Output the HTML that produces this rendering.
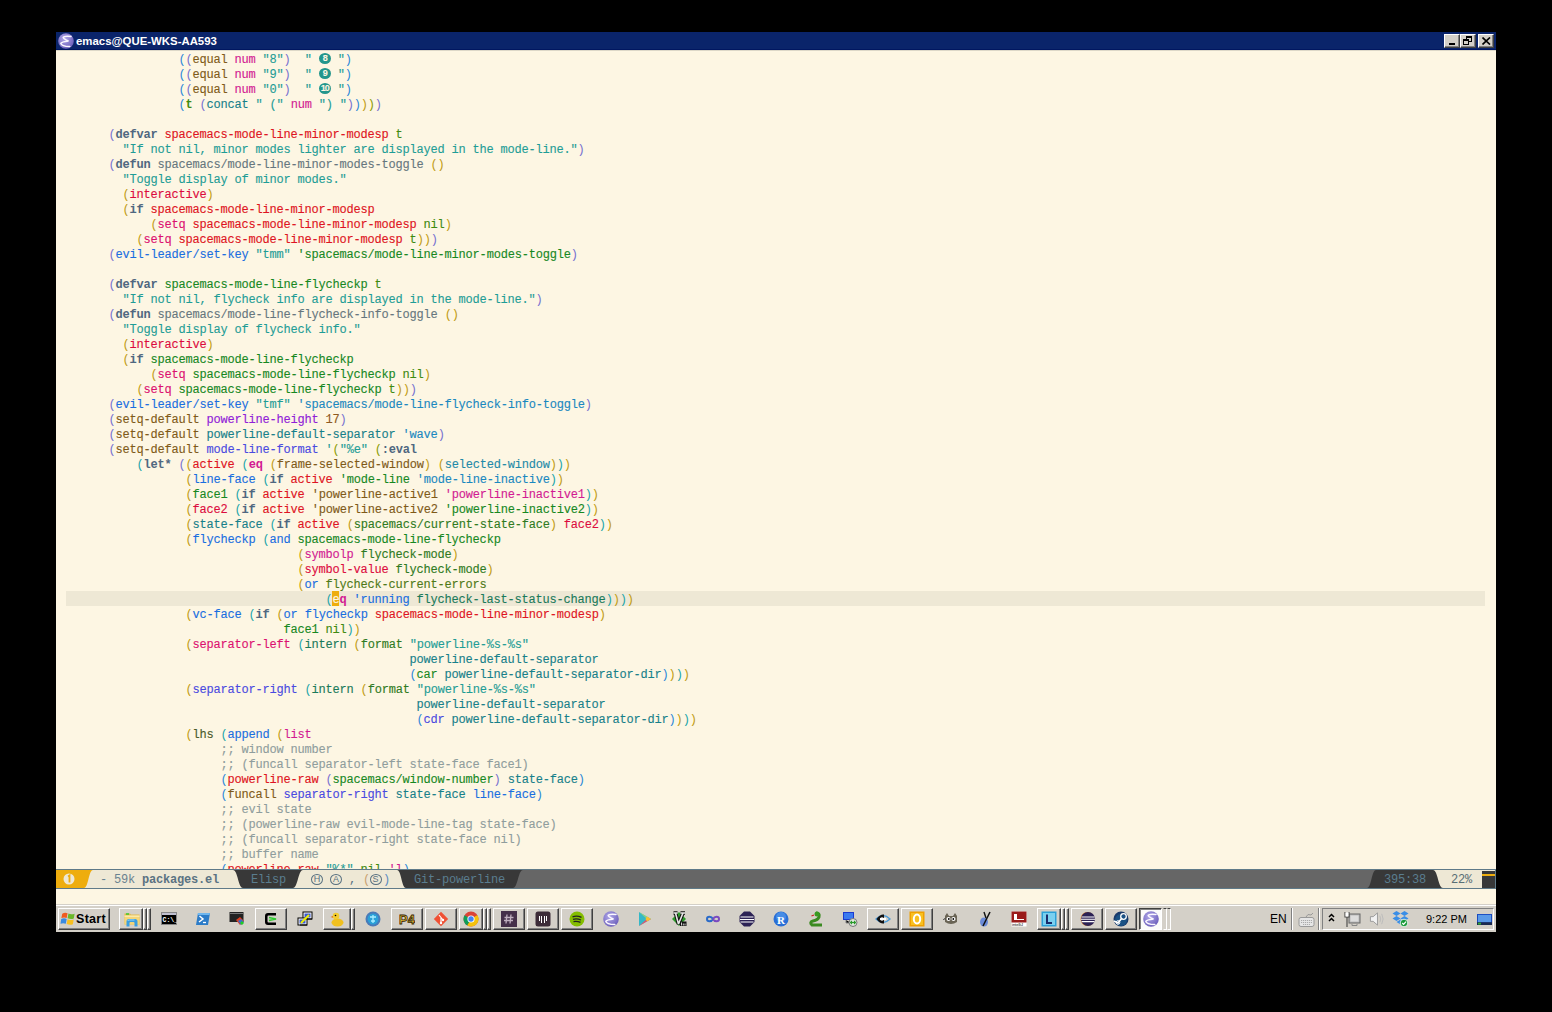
<!DOCTYPE html>
<html><head><meta charset="utf-8">
<style>
*{margin:0;padding:0;box-sizing:border-box}
html,body{width:1552px;height:1012px;background:#000;overflow:hidden}
body{position:relative;font-family:"Liberation Mono",monospace}
#win{position:absolute;left:56px;top:32px;width:1440px;height:900px;background:#fdf6e3;overflow:hidden}
#title{position:absolute;left:0;top:0;width:1440px;height:18px;background:#0a246a;border-bottom:1px solid #001660}
#tline{position:absolute;left:0;top:18px;width:1440px;height:1px;background:#ddd8c8;z-index:2}
#title .t{position:absolute;left:20px;top:2px;font:bold 11.4px "Liberation Sans",sans-serif;color:#fff;line-height:14px}
.wb{position:absolute;top:2px;width:16px;height:14px;background:#d4d0c8;border-top:1px solid #fff;border-left:1px solid #fff;border-right:1px solid #404040;border-bottom:1px solid #404040;box-shadow:inset -1px -1px 0 #808080}
#code{position:absolute;left:0;top:18px;width:1440px;height:819px;background:#fdf6e3;overflow:hidden}
#hl{position:absolute;left:10px;top:541px;width:1419px;height:15px;background:#eee8d5}
.ln{position:absolute;white-space:pre;font-size:12px;letter-spacing:-0.2px;-webkit-text-stroke:0.12px currentColor;line-height:15px;height:15px;color:#657b83}
.circ{display:inline-block;width:12px;height:15px;position:relative;vertical-align:top;letter-spacing:-1px;text-align:center;font:bold 9px/11px "Liberation Sans",sans-serif;color:#fdf6e3}
.circ b{position:absolute;left:0;top:0;width:12px;height:11px;border-radius:50%;background:#23968c;font-weight:bold}
.cur{color:#fdf6e3}
#cursor{position:absolute;left:276px;top:541px;width:7px;height:15px;background:#eead0e}
.pb{color:#2a86d8;-webkit-text-stroke:0;}
.pv{color:#7670d0;-webkit-text-stroke:0;}
.py{color:#bf9a10;-webkit-text-stroke:0;}
.pc{color:#20a4a8;-webkit-text-stroke:0;}
.pg{color:#8a9a00;-webkit-text-stroke:0;}
.kw{color:#4f6780;font-weight:bold;-webkit-text-stroke:0;}
.kwd{color:#4f6780;font-weight:bold;-webkit-text-stroke:0;}
.str{color:#1f9d96;}
.red{color:#de1422;}
.crim{color:#dc0c3e;}
.mag2{color:#dc1070;}
.mag{color:#d21a92;}
.magb{color:#d21a92;font-weight:bold;-webkit-text-stroke:0;}
.grn{color:#3f8a10;}
.grnb{color:#3f8a10;font-weight:bold;-webkit-text-stroke:0;}
.dgrn{color:#17881f;}
.dgrn2{color:#2f7a22;}
.gray{color:#66767e;}
.blue{color:#1a6ee0;}
.brn{color:#7f5a18;}
.brn2{color:#8f5a20;}
.pur{color:#9020d8;}
.teal{color:#17808a;}
.teal2{color:#1f8aa8;}
.teal3{color:#1a7a5a;}
.tblue{color:#1a88c0;}
.vio{color:#4a4ae0;}
.olv{color:#4f7a18;}
.olv2{color:#4a5a2a;}
.cmt{color:#8f9d9d;}
#ml{position:absolute;left:0;top:837px;width:1440px;height:20px}
.mt{position:absolute;top:4px;white-space:pre;font-size:12px;letter-spacing:-0.2px;line-height:15px}
.cl{position:absolute;top:5px;width:12px;height:11px;border:1px solid #587080;border-radius:50%;font:9px/9px "Liberation Sans",sans-serif;color:#587080;text-align:center}
#mb{position:absolute;left:0;top:857px;width:1440px;height:15px;background:#fdf6e3}
#tb{position:absolute;left:0;top:872px;width:1440px;height:28px;background:linear-gradient(#d4d0c8 0 1px,#fff 1px 2px,#d4d0c8 2px)}
.btn{position:absolute;top:4px;height:22px;background:#d4d0c8;border-top:1px solid #fff;border-left:1px solid #fff;border-right:1px solid #404040;border-bottom:1px solid #404040;box-shadow:inset -1px -1px 0 #808080}
.sep2{position:absolute;top:4px;width:4px;height:22px;border-left:1px solid #fff;border-top:1px solid #fff;border-right:1px solid #404040;border-bottom:1px solid #404040;box-shadow:inset -1px -1px 0 #808080;background:#d4d0c8}
.sep2.pr{border-top:1px solid #404040;border-left:1px solid #d4d0c8;border-right:1px solid #fff;border-bottom:1px solid #fff;box-shadow:none}
.btn.pr{border-top:1px solid #404040;border-left:1px solid #404040;border-right:1px solid #fff;border-bottom:1px solid #fff;box-shadow:inset 1px 1px 0 #808080;background:#fcfcfa}
.vs1{position:absolute;top:4px;width:2px;height:22px;border-left:1px solid #808080;border-right:1px solid #fff}
.ic{position:absolute;top:6px}
</style></head><body>
<div id="win">
 <div id="title">
  <svg style="position:absolute;left:2px;top:1px" width="16" height="16" viewBox="0 0 16 16"><defs><radialGradient id="eg" cx="0.4" cy="0.35" r="0.65"><stop offset="0" stop-color="#b0a8e8"/><stop offset="1" stop-color="#6f62bd"/></radialGradient></defs><circle cx="8" cy="8" r="7.8" fill="url(#eg)"/><path d="M13 3.4 Q6 2.6 5.2 4.4 Q5.5 6 10.5 8 Q3.5 8.8 2.8 10.4 Q3.5 13.4 11.8 13.6" stroke="#fbf8ff" stroke-width="1.5" fill="none" stroke-linecap="round"/></svg>
  <div class="t">emacs@QUE-WKS-AA593</div>
  <div class="wb" style="left:1388px"><div style="position:absolute;left:4px;top:8px;width:6px;height:2px;background:#000"></div></div>
  <div class="wb" style="left:1404px"><div style="position:absolute;left:5px;top:1px;width:6px;height:6px;border:1px solid #000;border-top-width:2px"></div><div style="position:absolute;left:2px;top:4px;width:6px;height:6px;border:1px solid #000;border-top-width:2px;background:#d4d0c8"></div></div>
  <div class="wb" style="left:1422px"><svg style="position:absolute;left:3px;top:2px" width="9" height="8"><path d="M0.5 0.5 L8 7.5 M8 0.5 L0.5 7.5" stroke="#000" stroke-width="1.7"/></svg></div>
 </div>
 <div id="tline"></div>
 <div id="code">
  <div id="hl"></div>
  <div id="cursor"></div>
<div class="ln" style="top:3px;left:122.5px"><span class="pb">(</span><span class="pv">(</span><span class="brn">equal</span> <span class="mag">num</span> <span class="str">&quot;8&quot;</span><span class="pv">)</span>  <span class="str">&quot; </span><span class="circ"><b>8</b></span><span class="str"> &quot;</span><span class="pb">)</span></div>
<div class="ln" style="top:18px;left:122.5px"><span class="pb">(</span><span class="pv">(</span><span class="brn">equal</span> <span class="mag">num</span> <span class="str">&quot;9&quot;</span><span class="pv">)</span>  <span class="str">&quot; </span><span class="circ"><b>9</b></span><span class="str"> &quot;</span><span class="pb">)</span></div>
<div class="ln" style="top:33px;left:122.5px"><span class="pb">(</span><span class="pv">(</span><span class="brn">equal</span> <span class="mag">num</span> <span class="str">&quot;0&quot;</span><span class="pv">)</span>  <span class="str">&quot; </span><span class="circ"><b>10</b></span><span class="str"> &quot;</span><span class="pb">)</span></div>
<div class="ln" style="top:48px;left:122.5px"><span class="pb">(</span><span class="grnb">t</span> <span class="pv">(</span><span class="teal">concat</span> <span class="str">&quot; (&quot;</span> <span class="mag">num</span> <span class="str">&quot;) &quot;</span><span class="pv">)</span><span class="pb">)</span><span class="py">)</span><span class="pg">)</span><span class="pv">)</span></div>
<div class="ln" style="top:78px;left:52.5px"><span class="pv">(</span><span class="kw">defvar</span> <span class="red">spacemacs-mode-line-minor-modesp</span> <span class="grn">t</span></div>
<div class="ln" style="top:93px;left:66.5px"><span class="str">&quot;If not nil, minor modes lighter are displayed in the mode-line.&quot;</span><span class="pv">)</span></div>
<div class="ln" style="top:108px;left:52.5px"><span class="pv">(</span><span class="kw">defun</span> <span class="gray">spacemacs/mode-line-minor-modes-toggle</span> <span class="py">()</span></div>
<div class="ln" style="top:123px;left:66.5px"><span class="str">&quot;Toggle display of minor modes.&quot;</span></div>
<div class="ln" style="top:138px;left:66.5px"><span class="py">(</span><span class="crim">interactive</span><span class="py">)</span></div>
<div class="ln" style="top:153px;left:66.5px"><span class="py">(</span><span class="kw">if</span> <span class="red">spacemacs-mode-line-minor-modesp</span></div>
<div class="ln" style="top:168px;left:94.5px"><span class="py">(</span><span class="mag2">setq</span> <span class="red">spacemacs-mode-line-minor-modesp</span> <span class="grn">nil</span><span class="py">)</span></div>
<div class="ln" style="top:183px;left:80.5px"><span class="py">(</span><span class="mag2">setq</span> <span class="red">spacemacs-mode-line-minor-modesp</span> <span class="grn">t</span><span class="py">)</span><span class="py">)</span><span class="pv">)</span></div>
<div class="ln" style="top:198px;left:52.5px"><span class="pv">(</span><span class="blue">evil-leader/set-key</span> <span class="str">&quot;tmm&quot;</span> <span class="dgrn">&#x27;spacemacs/mode-line-minor-modes-toggle</span><span class="pv">)</span></div>
<div class="ln" style="top:228px;left:52.5px"><span class="pv">(</span><span class="kw">defvar</span> <span class="dgrn">spacemacs-mode-line-flycheckp</span> <span class="grn">t</span></div>
<div class="ln" style="top:243px;left:66.5px"><span class="str">&quot;If not nil, flycheck info are displayed in the mode-line.&quot;</span><span class="pv">)</span></div>
<div class="ln" style="top:258px;left:52.5px"><span class="pv">(</span><span class="kw">defun</span> <span class="gray">spacemacs/mode-line-flycheck-info-toggle</span> <span class="py">()</span></div>
<div class="ln" style="top:273px;left:66.5px"><span class="str">&quot;Toggle display of flycheck info.&quot;</span></div>
<div class="ln" style="top:288px;left:66.5px"><span class="py">(</span><span class="crim">interactive</span><span class="py">)</span></div>
<div class="ln" style="top:303px;left:66.5px"><span class="py">(</span><span class="kw">if</span> <span class="dgrn">spacemacs-mode-line-flycheckp</span></div>
<div class="ln" style="top:318px;left:94.5px"><span class="py">(</span><span class="mag2">setq</span> <span class="dgrn">spacemacs-mode-line-flycheckp</span> <span class="grn">nil</span><span class="py">)</span></div>
<div class="ln" style="top:333px;left:80.5px"><span class="py">(</span><span class="mag2">setq</span> <span class="dgrn">spacemacs-mode-line-flycheckp</span> <span class="grn">t</span><span class="py">)</span><span class="py">)</span><span class="pv">)</span></div>
<div class="ln" style="top:348px;left:52.5px"><span class="pv">(</span><span class="blue">evil-leader/set-key</span> <span class="str">&quot;tmf&quot;</span> <span class="tblue">&#x27;spacemacs/mode-line-flycheck-info-toggle</span><span class="pv">)</span></div>
<div class="ln" style="top:363px;left:52.5px"><span class="pv">(</span><span class="brn">setq-default</span> <span class="pur">powerline-height</span> <span class="brn2">17</span><span class="pv">)</span></div>
<div class="ln" style="top:378px;left:52.5px"><span class="pv">(</span><span class="brn">setq-default</span> <span class="teal">powerline-default-separator</span> <span class="tblue">&#x27;wave</span><span class="pv">)</span></div>
<div class="ln" style="top:393px;left:52.5px"><span class="pv">(</span><span class="brn">setq-default</span> <span class="vio">mode-line-format</span> <span class="str">&#x27;</span><span class="pg">(</span><span class="str">&quot;%e&quot;</span> <span class="pg">(</span><span class="kwd">:eval</span></div>
<div class="ln" style="top:408px;left:80.5px"><span class="pc">(</span><span class="kw">let*</span> <span class="pv">(</span><span class="py">(</span><span class="red">active</span> <span class="pc">(</span><span class="magb">eq</span> <span class="py">(</span><span class="brn">frame-selected-window</span><span class="py">)</span> <span class="py">(</span><span class="teal2">selected-window</span><span class="py">)</span><span class="pc">)</span><span class="py">)</span></div>
<div class="ln" style="top:423px;left:129.5px"><span class="py">(</span><span class="blue">line-face</span> <span class="pc">(</span><span class="kw">if</span> <span class="red">active</span> <span class="dgrn">&#x27;mode-line</span> <span class="tblue">&#x27;mode-line-inactive</span><span class="pc">)</span><span class="py">)</span></div>
<div class="ln" style="top:438px;left:129.5px"><span class="py">(</span><span class="dgrn">face1</span> <span class="pc">(</span><span class="kw">if</span> <span class="red">active</span> <span class="brn">&#x27;powerline-active1</span> <span class="mag">&#x27;powerline-inactive1</span><span class="pc">)</span><span class="py">)</span></div>
<div class="ln" style="top:453px;left:129.5px"><span class="py">(</span><span class="crim">face2</span> <span class="pc">(</span><span class="kw">if</span> <span class="red">active</span> <span class="brn">&#x27;powerline-active2</span> <span class="dgrn">&#x27;powerline-inactive2</span><span class="pc">)</span><span class="py">)</span></div>
<div class="ln" style="top:468px;left:129.5px"><span class="py">(</span><span class="teal">state-face</span> <span class="pc">(</span><span class="kw">if</span> <span class="red">active</span> <span class="py">(</span><span class="dgrn2">spacemacs/current-state-face</span><span class="py">)</span> <span class="crim">face2</span><span class="pc">)</span><span class="py">)</span></div>
<div class="ln" style="top:483px;left:129.5px"><span class="py">(</span><span class="blue">flycheckp</span> <span class="pc">(</span><span class="blue">and</span> <span class="dgrn">spacemacs-mode-line-flycheckp</span></div>
<div class="ln" style="top:498px;left:241.5px"><span class="py">(</span><span class="mag">symbolp</span> <span class="dgrn2">flycheck-mode</span><span class="py">)</span></div>
<div class="ln" style="top:513px;left:241.5px"><span class="py">(</span><span class="crim">symbol-value</span> <span class="dgrn2">flycheck-mode</span><span class="py">)</span></div>
<div class="ln" style="top:528px;left:241.5px"><span class="py">(</span><span class="blue">or</span> <span class="olv">flycheck-current-errors</span></div>
<div class="ln" style="top:543px;left:269.5px"><span class="pc">(</span><span class="cur">e</span><span class="magb">q</span> <span class="blue">&#x27;running</span> <span class="teal3">flycheck-last-status-change</span><span class="pc">)</span><span class="py">)</span><span class="pc">)</span><span class="py">)</span></div>
<div class="ln" style="top:558px;left:129.5px"><span class="py">(</span><span class="blue">vc-face</span> <span class="pc">(</span><span class="kw">if</span> <span class="py">(</span><span class="blue">or</span> <span class="blue">flycheckp</span> <span class="red">spacemacs-mode-line-minor-modesp</span><span class="py">)</span></div>
<div class="ln" style="top:573px;left:227.5px"><span class="dgrn">face1</span> <span class="grn">nil</span><span class="pc">)</span><span class="py">)</span></div>
<div class="ln" style="top:588px;left:129.5px"><span class="py">(</span><span class="mag2">separator-left</span> <span class="pc">(</span><span class="teal3">intern</span> <span class="py">(</span><span class="dgrn2">format</span> <span class="str">&quot;powerline-%s-%s&quot;</span></div>
<div class="ln" style="top:603px;left:353.5px"><span class="teal">powerline-default-separator</span></div>
<div class="ln" style="top:618px;left:353.5px"><span class="pb">(</span><span class="dgrn">car</span> <span class="teal">powerline-default-separator-dir</span><span class="pb">)</span><span class="py">)</span><span class="pc">)</span><span class="py">)</span></div>
<div class="ln" style="top:633px;left:129.5px"><span class="py">(</span><span class="vio">separator-right</span> <span class="pc">(</span><span class="teal3">intern</span> <span class="py">(</span><span class="dgrn2">format</span> <span class="str">&quot;powerline-%s-%s&quot;</span></div>
<div class="ln" style="top:648px;left:360.5px"><span class="teal">powerline-default-separator</span></div>
<div class="ln" style="top:663px;left:360.5px"><span class="pb">(</span><span class="vio">cdr</span> <span class="teal">powerline-default-separator-dir</span><span class="pb">)</span><span class="py">)</span><span class="pc">)</span><span class="py">)</span></div>
<div class="ln" style="top:678px;left:129.5px"><span class="py">(</span><span class="olv2">lhs</span> <span class="pc">(</span><span class="blue">append</span> <span class="py">(</span><span class="mag">list</span></div>
<div class="ln" style="top:693px;left:164.5px"><span class="cmt">;; window number</span></div>
<div class="ln" style="top:708px;left:164.5px"><span class="cmt">;; (funcall separator-left state-face face1)</span></div>
<div class="ln" style="top:723px;left:164.5px"><span class="pb">(</span><span class="red">powerline-raw</span> <span class="pv">(</span><span class="dgrn">spacemacs/window-number</span><span class="pv">)</span> <span class="teal">state-face</span><span class="pb">)</span></div>
<div class="ln" style="top:738px;left:164.5px"><span class="pb">(</span><span class="brn">funcall</span> <span class="vio">separator-right</span> <span class="teal">state-face</span> <span class="blue">line-face</span><span class="pb">)</span></div>
<div class="ln" style="top:753px;left:164.5px"><span class="cmt">;; evil state</span></div>
<div class="ln" style="top:768px;left:164.5px"><span class="cmt">;; (powerline-raw evil-mode-line-tag state-face)</span></div>
<div class="ln" style="top:783px;left:164.5px"><span class="cmt">;; (funcall separator-right state-face nil)</span></div>
<div class="ln" style="top:798px;left:164.5px"><span class="cmt">;; buffer name</span></div>
<div class="ln" style="top:813px;left:164.5px"><span class="pb">(</span><span class="red">powerline-raw</span> <span class="str">&quot;%*&quot;</span> <span class="grn">nil</span> <span class="mag">&#x27;l</span><span class="pb">)</span></div>
 </div>
 <div id="ml">
  <svg width="1440" height="20" style="position:absolute;left:0;top:0">
   <rect x="0" y="0" width="1440" height="20" fill="#eee8d5"/>
   <path d="M0 1 H37 C32.5 1 32.5 19 28 19 H0 Z" fill="#eead0e"/>
   <path d="M177 1 H247 C242 1 242 19 237 19 H187 C182 19 182 1 177 1 Z" fill="#383838"/>
   <path d="M341 1 H1377 C1382 1 1382 19 1387 19 H350 C345.5 19 345.5 1 341 1 Z" fill="#383838"/>
   <path d="M467 1 H1320 C1315.5 1 1315.5 19 1311 19 H457 C462 19 462 1 467 1 Z" fill="#666666"/>
   <rect x="1426" y="2" width="13" height="17" fill="#383838"/>
   <rect x="1426" y="5" width="13" height="2" fill="#eead0e"/>
   <rect x="0" y="0" width="1440" height="1" fill="#5f7a89"/>
   <rect x="0" y="19" width="1440" height="1" fill="#5f7a89"/>
   <rect x="1439" y="0" width="1" height="20" fill="#5f7a89"/>
  </svg>
  <div class="mt" style="left:44px;color:#6a8290">- 59k <b style="color:#5a7282">packages.el</b></div>
  <div class="mt" style="left:195px;color:#5a7d8f">Elisp</div>
  <div class="cl" style="left:255px">H</div><div class="cl" style="left:274px">A</div><div class="mt" style="left:293px;color:#587080">,</div><div class="mt" style="left:307px;color:#c8a070">(</div><div class="cl" style="left:313.5px">S</div><div class="mt" style="left:327px;color:#5a8ac0">)</div>
  <div class="mt" style="left:358px;color:#5a7d8f">Git-powerline</div>
  <div class="mt" style="left:1328px;color:#5a7d8f">395:38</div>
  <div class="mt" style="left:1395px;color:#586e75">22%</div>
  <svg style="position:absolute;left:7px;top:4px" width="12" height="12"><circle cx="6" cy="6" r="5.5" fill="#eee8d5"/><path d="M5 3.5 L6.5 2.5 V9.5" stroke="#eead0e" stroke-width="1.8" fill="none"/></svg>
 </div>
 <div id="mb"></div>
 <div id="tb">
<div class="btn" style="left:2px;width:52px"></div>
<svg class="ic" style="left:4px;top:7px" width="16" height="15" viewBox="0 0 17 17"><path d="M2 3 Q5 1 8 2.5 L7 8 Q4 6.5 1 8 Z" fill="#f05a20"/><path d="M9 2.8 Q12 4.5 16 3 L15 8.5 Q12 10 8 8.3 Z" fill="#6ab82a"/><path d="M0.8 9 Q4 7.5 7 9 L6 14.5 Q3 13 0 14.5 Z" fill="#3a8ae0"/><path d="M8 9.3 Q11 11 15 9.5 L14 15 Q11 16.5 7 14.8 Z" fill="#f8c020"/></svg>
<div style="position:absolute;left:20px;top:4px;height:22px;font:bold 12.5px 'Liberation Sans',sans-serif;color:#000;line-height:22px;letter-spacing:0.3px">Start</div>
<div class="btn" style="left:63px;width:24px"></div>
<div class="btn" style="left:199px;width:32px"></div>
<div class="btn" style="left:267px;width:28px"></div>
<div class="btn" style="left:335px;width:32px"></div>
<div class="btn" style="left:369px;width:32px"></div>
<div class="btn" style="left:403px;width:24px"></div>
<div class="btn" style="left:437px;width:32px"></div>
<div class="btn" style="left:471px;width:32px"></div>
<div class="btn" style="left:505px;width:32px"></div>
<div class="btn" style="left:811px;width:32px"></div>
<div class="btn" style="left:845px;width:32px"></div>
<div class="btn" style="left:981px;width:24px"></div>
<div class="btn" style="left:1015px;width:32px"></div>
<div class="btn" style="left:1049px;width:32px"></div>
<div class="btn pr" style="left:1083px;width:23px"></div>
<div class="sep2" style="left:87px"></div><div class="sep2" style="left:91px"></div>
<div class="sep2" style="left:427px"></div><div class="sep2" style="left:431px"></div>
<div class="sep2" style="left:1005px"></div><div class="sep2" style="left:1009px"></div>
<div class="sep2" style="left:295px"></div>
<div class="sep2 pr" style="left:1107px"></div><div class="sep2 pr" style="left:1111px"></div>
<svg class="ic" style="left:68px;top:7px" width="16" height="16" viewBox="0 0 16 16"><path d="M0.5 2.5 H6 L7 3.5 H15.5 V13.5 H0.5 Z" fill="#e2b84a"/><path d="M0.5 4.5 H15.5 V13.5 H0.5 Z" fill="#f4d678"/><path d="M0.5 4.5 H15.5 V6 H0.5Z" fill="#fbe9a8"/><path d="M2 3 H5" stroke="#2c2" stroke-width="1.3"/><path d="M2.5 15.5 V10.5 Q2.5 8 5 8 H11 Q13.5 8 13.5 10.5 V15.5 H10.5 V12 Q10.5 11 9.5 11 H6.5 Q5.5 11 5.5 12 V15.5 Z" fill="#3a9ee0"/><path d="M3.5 10 Q4 9 5.5 9 H10.5" stroke="#9ad6f8" stroke-width="1" fill="none"/></svg>
<svg class="ic" style="left:105px;top:7px" width="16" height="16" viewBox="0 0 16 16"><rect x="0.5" y="1.5" width="15" height="12" fill="#000" stroke="#888"/><rect x="1" y="2" width="14" height="2" fill="#c0c0d0"/><text x="1.5" y="11" font-family="Liberation Mono" font-size="6.5" font-weight="bold" fill="#fff">C:\_</text></svg>
<svg class="ic" style="left:139px;top:7px" width="16" height="16" viewBox="0 0 16 16"><path d="M3 2 H15 L13 14 H1 Z" fill="#2c7cc8"/><path d="M3 2 H15 L14.5 4 H2.6 Z" fill="#6fb6ee"/><path d="M4.5 5 L8 8 L4 11" stroke="#fff" stroke-width="1.5" fill="none"/><path d="M8 11.5 H11" stroke="#fff" stroke-width="1.3"/></svg>
<svg class="ic" style="left:173px;top:7px" width="16" height="16" viewBox="0 0 16 16"><rect x="0.5" y="1" width="14" height="10" fill="#222"/><path d="M1 2 H14 V3 H1Z" fill="#777"/><path d="M7 9 L11 6 L15 10 L11 14 Z" fill="#e04020"/><path d="M9 10 L12 8 L15 11 L12 14 Z" fill="#3a6ad0"/><path d="M11 12 L13 10 L15 12 L13 14Z" fill="#2c2"/></svg>
<svg class="ic" style="left:207px;top:7px" width="16" height="16" viewBox="0 0 16 16"><path d="M13 2 H5 Q2 2 2 5 V11 Q2 14 5 14 H13 V11.5 H5.5 Q4.5 11.5 4.5 10.5 V5.5 Q4.5 4.5 5.5 4.5 H13 Z" fill="#000"/><path d="M6 6.5 L13 8 L6 9.5" stroke="#3c3" stroke-width="1.7" fill="none"/></svg>
<svg class="ic" style="left:241px;top:7px" width="16" height="16" viewBox="0 0 16 16"><rect x="6" y="1" width="9" height="7" fill="#fff" stroke="#000"/><rect x="7.5" y="2.5" width="6" height="4" fill="#3a5ad0"/><rect x="1" y="7" width="9" height="7" fill="#fff" stroke="#000"/><rect x="2.5" y="8.5" width="6" height="4" fill="#3a5ad0"/><path d="M3 14 H10 M8 8 H15" stroke="#000"/><path d="M4 12 L12 4" stroke="#ee0" stroke-width="2"/></svg>
<svg class="ic" style="left:273px;top:7px" width="16" height="16" viewBox="0 0 16 16"><ellipse cx="8.5" cy="11.5" rx="6" ry="4" fill="#f0c020"/><circle cx="7" cy="5" r="3.3" fill="#f4cc30"/><path d="M4 5 L1.5 6 L4 6.8Z" fill="#e07010"/><circle cx="6.5" cy="4.5" r=".8" fill="#000"/></svg>
<svg class="ic" style="left:309px;top:7px" width="16" height="16" viewBox="0 0 16 16"><circle cx="8" cy="8" r="7.5" fill="#4a7ab8"/><circle cx="8" cy="8" r="5.5" fill="#2aa0d8"/><path d="M5 6 H11 M8 4 V12 M6 10 H10" stroke="#aef" stroke-width="1.3"/></svg>
<svg class="ic" style="left:343px;top:7px" width="16" height="16" viewBox="0 0 16 16"><text x="0" y="13" font-family="Liberation Sans" font-weight="bold" font-size="13" fill="#f0c840" stroke="#332200" stroke-width=".8">P4</text></svg>
<svg class="ic" style="left:377px;top:7px" width="16" height="16" viewBox="0 0 16 16"><path d="M8 0.8 L15.2 8 L8 15.2 L0.8 8 Z" fill="#f05033"/><path d="M6 4 L10 9 M8 7 V12" stroke="#fff" stroke-width="1.2"/><circle cx="8" cy="12" r="1.2" fill="#fff"/><circle cx="10" cy="9" r="1.2" fill="#fff"/></svg>
<svg class="ic" style="left:407px;top:7px" width="16" height="16" viewBox="0 0 16 16"><circle cx="8" cy="8" r="7.5" fill="#db4437"/><path d="M8 8 L1.5 4.3 A7.5 7.5 0 0 0 4.3 14.5 Z" fill="#0f9d58"/><path d="M8 8 L4.3 14.5 A7.5 7.5 0 0 0 15.5 8 L14.5 4.3 Z" fill="#f4c20d"/><path d="M8 8 L15.5 8 A7.5 7.5 0 0 0 14.5 4.3 Z" fill="#f4c20d"/><circle cx="8" cy="8" r="3.6" fill="#fff"/><circle cx="8" cy="8" r="2.7" fill="#4285f4"/></svg>
<svg class="ic" style="left:445px;top:7px" width="16" height="16" viewBox="0 0 16 16"><rect x="0" y="0" width="16" height="16" fill="#45304a"/><path d="M6 3.5 L5 12.5 M10 3.5 L9 12.5 M3.5 6.5 H12.5 M3 9.5 H12" stroke="#c0b0c0" stroke-width="1.3"/></svg>
<svg class="ic" style="left:479px;top:7px" width="16" height="16" viewBox="0 0 16 16"><rect x="0.5" y="0.5" width="15" height="15" rx="2.5" fill="#3d2c38"/><rect x="4" y="5" width="1" height="5" fill="#fff"/><rect x="6" y="5" width="1" height="7" fill="#fff"/><rect x="9" y="5" width="1" height="7" fill="#fff"/><rect x="11" y="5" width="1" height="5" fill="#fff"/></svg>
<svg class="ic" style="left:513px;top:7px" width="16" height="16" viewBox="0 0 16 16"><circle cx="8" cy="8" r="7.5" fill="#84bd00"/><path d="M3.5 5.8 Q8 4.3 12.5 6.3 M4 8.3 Q8 7.2 12 9 M4.5 10.6 Q8 9.8 11.5 11.4" stroke="#222" stroke-width="1.3" fill="none"/></svg>
<svg class="ic" style="left:547px;top:7px" width="16" height="16" viewBox="0 0 16 16"><circle cx="8" cy="8" r="7.8" fill="url(#eg)"/><path d="M13 3.4 Q6 2.6 5.2 4.4 Q5.5 6 10.5 8 Q3.5 8.8 2.8 10.4 Q3.5 13.4 11.8 13.6" stroke="#fbf8ff" stroke-width="1.5" fill="none" stroke-linecap="round"/></svg>
<svg class="ic" style="left:581px;top:7px" width="16" height="16" viewBox="0 0 16 16"><path d="M2 1 L14 8 L2 15 Z" fill="#34b8c8"/><path d="M2 1 L10 8 L14 8 Z" fill="#a6d86a" opacity=".8"/><path d="M10 8 L14 8 L2 15 Z" fill="#e8506a"/><path d="M10 5.5 L14 8 L10 10.5 L8.5 8 Z" fill="#f8c030"/></svg>
<svg class="ic" style="left:615px;top:7px" width="16" height="16" viewBox="0 0 16 16"><path d="M8 1 L15 8 L8 15 L1 8Z" fill="#2a9a2a"/><path d="M2.5 2 H6.5 M9.5 2 H14 M4.5 2 L7.5 13 L12 2" stroke="#111" stroke-width="3.6" fill="none" stroke-linejoin="bevel"/><path d="M2.5 2 H6.5 M9.5 2 H14 M4.5 2 L7.5 13 L12 2" stroke="#e6e6e6" stroke-width="1.6" fill="none" stroke-linejoin="bevel"/><path d="M9 10.5 H15.5 V15 H9Z" fill="#111"/><path d="M10.5 11.5 V14.5 M12.3 12.5 V14.5 M14 12.5 V14.5" stroke="#e6e6e6" stroke-width=".9"/></svg>
<svg class="ic" style="left:649px;top:7px" width="16" height="16" viewBox="0 0 16 16"><path d="M8 8 C6.5 5 2 5 2 8 C2 11 6.5 11 8 8" stroke="#2a6ac8" stroke-width="2" fill="none"/><path d="M8 8 C9.5 5 14 5 14 8 C14 11 9.5 11 8 8" stroke="#7a4ac0" stroke-width="2" fill="none"/></svg>
<svg class="ic" style="left:683px;top:7px" width="16" height="16" viewBox="0 0 16 16"><path d="M5 0.5 H11 L15.5 5 V11 L11 15.5 H5 L0.5 11 V5 Z" fill="#2c2255"/><path d="M1.5 6 H14.5 M1 8.5 H15 M1.5 11 H14.5" stroke="#fff" stroke-width="1.2"/></svg>
<svg class="ic" style="left:717px;top:7px" width="16" height="16" viewBox="0 0 16 16"><circle cx="8" cy="8" r="7.5" fill="#2a6fd6"/><circle cx="8" cy="6" r="5" fill="#5aa0f0" opacity=".6"/><text x="4" y="12.5" font-family="Liberation Serif" font-weight="bold" font-size="11" fill="#fff">R</text></svg>
<svg class="ic" style="left:751px;top:7px" width="16" height="16" viewBox="0 0 16 16"><path d="M9 2 Q13 2 12 6 Q11 9 6 10 Q2 11 5 14 H15" stroke="#3a8a20" stroke-width="3" fill="none"/><circle cx="10" cy="3" r="2.5" fill="#3a9a20"/><path d="M7 4 L4.5 5" stroke="#d02020" stroke-width="1.2"/></svg>
<svg class="ic" style="left:786px;top:7px" width="16" height="16" viewBox="0 0 16 16"><rect x="1" y="1" width="11" height="8" fill="#1a3ad0"/><rect x="2" y="2" width="9" height="6" fill="#3a7af0"/><path d="M4 9 V12 H9" stroke="#888"/><circle cx="11" cy="11.5" r="4" fill="#e0e8e0" stroke="#777"/><path d="M8.5 11.5 H13.5 M10 10 L8.5 11.5 L10 13 M12 10 L13.5 11.5 L12 13" stroke="#2a9a2a" stroke-width="1.1" fill="none"/></svg>
<svg class="ic" style="left:819px;top:7px" width="16" height="16" viewBox="0 0 16 16"><path d="M1 8 Q8 1 15 8 Q8 15 1 8Z" fill="none" stroke="#4a9ad8" stroke-width="1.3"/><path d="M1.5 8 Q5 3 9 3.5 V12.5 Q5 13 1.5 8Z" fill="#111"/><circle cx="7" cy="8" r="1.8" fill="#fff"/><rect x="5" y="7" width="6" height="2" fill="#fff"/></svg>
<svg class="ic" style="left:853px;top:7px" width="16" height="16" viewBox="0 0 16 16"><rect x="0.5" y="0.5" width="15" height="15" fill="#f0a000"/><rect x="2" y="2" width="12" height="12" fill="#f8c020"/><ellipse cx="8" cy="8" rx="3.2" ry="4.5" fill="none" stroke="#fff" stroke-width="2"/></svg>
<svg class="ic" style="left:887px;top:7px" width="16" height="16" viewBox="0 0 16 16"><path d="M2 5 L4 2 L6 5 H10 L12 2 L14 5 V11 Q8 15 2 11 Z" fill="#6a6455"/><circle cx="5.5" cy="8" r="2" fill="#fff"/><circle cx="10.5" cy="8" r="2" fill="#fff"/><circle cx="5.8" cy="8" r=".9" fill="#000"/><circle cx="10.3" cy="8" r=".9" fill="#000"/><path d="M0.5 9 Q1 7 2.5 8" stroke="#333" fill="none"/></svg>
<svg class="ic" style="left:921px;top:7px" width="16" height="16" viewBox="0 0 16 16"><ellipse cx="7" cy="11" rx="4" ry="4.5" fill="#6a8ad8"/><path d="M13 1 L6 15" stroke="#111" stroke-width="1.6"/><path d="M7 1 L9 7" stroke="#111" stroke-width="1.4"/></svg>
<svg class="ic" style="left:955px;top:7px" width="16" height="16" viewBox="0 0 16 16"><rect x="0.5" y="0.5" width="15" height="15" fill="#fff"/><rect x="0.5" y="0.5" width="15" height="11" fill="#9a1a1a"/><rect x="3" y="3" width="10" height="6" fill="#fff"/><path d="M6 3 H13 V8 H6" fill="#9a1a1a"/><text x="1" y="15" font-family="Liberation Sans" font-size="4" fill="#000">intelliJ</text></svg>
<svg class="ic" style="left:985px;top:7px" width="16" height="16" viewBox="0 0 16 16"><rect x="0.5" y="0.5" width="15" height="15" fill="#2aa0d8"/><rect x="2" y="2" width="12" height="12" fill="#7ad0f0"/><path d="M6 3.5 V12 H11" stroke="#1a2a6a" stroke-width="2" fill="none"/></svg>
<svg class="ic" style="left:1023px;top:7px" width="16" height="16" viewBox="0 0 16 16"><circle cx="8.5" cy="8" r="7" fill="#f08a20"/><circle cx="9" cy="8" r="7" fill="#2c2255"/><path d="M2.5 6 H15.5 M2 8.3 H16 M2.5 10.6 H15.5" stroke="#fff" stroke-width="1.1"/></svg>
<svg class="ic" style="left:1057px;top:7px" width="16" height="16" viewBox="0 0 16 16"><circle cx="8" cy="8" r="7.5" fill="#1a3a6a"/><circle cx="8" cy="9" r="6" fill="#1a6aa0" opacity=".5"/><circle cx="10.5" cy="5.5" r="2.8" fill="none" stroke="#fff" stroke-width="1.3"/><path d="M1 10 L5 12 L9 7" stroke="#fff" stroke-width="1.6" fill="none"/><circle cx="5" cy="11.5" r="1.8" fill="none" stroke="#fff"/></svg>
<svg class="ic" style="left:1087px;top:7px" width="16" height="16" viewBox="0 0 16 16"><circle cx="8" cy="8" r="7.8" fill="url(#eg)"/><path d="M13 3.4 Q6 2.6 5.2 4.4 Q5.5 6 10.5 8 Q3.5 8.8 2.8 10.4 Q3.5 13.4 11.8 13.6" stroke="#fbf8ff" stroke-width="1.5" fill="none" stroke-linecap="round"/></svg>
<div style="position:absolute;left:1214px;top:4px;width:16px;height:22px;font:12px 'Liberation Sans',sans-serif;color:#000;line-height:22px">EN</div>
<div class="vs1" style="left:1235px"></div>
<svg class="ic" style="left:1242px;top:8px" width="17" height="15" viewBox="0 0 17 15"><path d="M8 5 L10 2.5 L13 3 L15 1" stroke="#999" fill="none"/><rect x="1" y="5.5" width="15" height="9" rx="2" fill="#e6e6e6" stroke="#9a9a9a"/><path d="M3 8.5 H14 M3 10.5 H14 M5 12.5 H12" stroke="#aaa" stroke-dasharray="1.2 .8"/></svg>
<div class="vs1" style="left:1262px"></div>
<div style="position:absolute;left:1266px;top:4px;width:172px;height:22px;border-top:1px solid #808080;border-left:1px solid #808080;border-bottom:1px solid #fff;border-right:1px solid #fff"></div>
<svg class="ic" style="left:1272px;top:9px" width="7" height="9" viewBox="0 0 7 9"><path d="M1 4 L3.5 1.5 L6 4 M1 8 L3.5 5.5 L6 8" stroke="#000" stroke-width="1.5" fill="none"/></svg>
<svg class="ic" style="left:1288px;top:7px" width="17" height="16" viewBox="0 0 17 16"><rect x="5" y="3" width="11" height="9" fill="#bbb" stroke="#666"/><rect x="6.5" y="4.5" width="8" height="6" fill="#ddd"/><path d="M8 13 V14.5 H13 V13" stroke="#888" fill="none"/><path d="M1 1 V6 H5 V1 M3 6 V16" stroke="#444" stroke-width="1.1" fill="none"/><rect x="1.5" y="1.5" width="3" height="4" fill="#fff"/></svg>
<svg class="ic" style="left:1313px;top:7px" width="16" height="16" viewBox="0 0 16 17"><path d="M1 6 H4 L8.5 2 V15 L4 11 H1 Z" fill="#f2f2f2" stroke="#999"/><path d="M11 5 Q13 8.5 11 12 M13 3 Q16 8.5 13 14" stroke="#bbb" fill="none"/></svg>
<svg class="ic" style="left:1336px;top:6px" width="17" height="17" viewBox="0 0 17 17"><path d="M4.5 1 L8.5 3.5 L4.5 6 L0.5 3.5Z M12.5 1 L16.5 3.5 L12.5 6 L8.5 3.5Z M4.5 6 L8.5 8.5 L4.5 11 L0.5 8.5Z M12.5 6 L16.5 8.5 L12.5 11 L8.5 8.5Z M4.5 12 L8.5 9.5 L12.5 12 L8.5 14.5Z" fill="#3a8ee6"/><circle cx="12" cy="13" r="3.8" fill="#1a9a3a" stroke="#fff" stroke-width=".8"/><path d="M10.2 13 L11.6 14.4 L14 11.6" stroke="#fff" stroke-width="1.3" fill="none"/></svg>
<div style="position:absolute;left:1370px;top:4px;height:22px;font:11px 'Liberation Sans',sans-serif;color:#000;line-height:22px;white-space:pre">9:22 PM</div>
<svg class="ic" style="left:1421px;top:10px" width="15" height="11" viewBox="0 0 15 12" preserveAspectRatio="none"><rect x="0" y="0" width="15" height="12" fill="#1a4ac0"/><rect x="1" y="1" width="13" height="8" fill="#5a9ae8"/><rect x="0" y="9" width="15" height="3" fill="#1a2a50"/><rect x="1" y="9.5" width="3" height="2" fill="#3a3"/></svg>

 </div>
</div>
</body></html>
